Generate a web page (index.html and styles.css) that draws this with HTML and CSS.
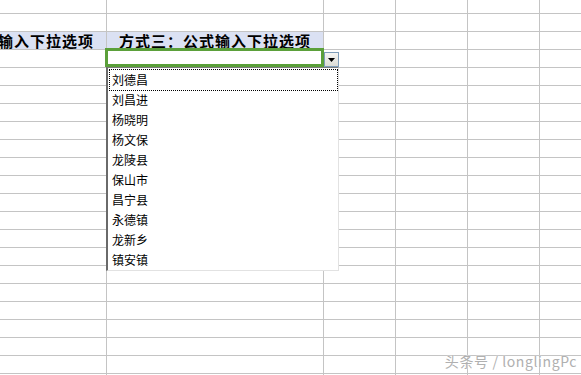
FILE: index.html
```html
<!DOCTYPE html>
<html lang="zh-CN">
<head>
    <meta charset="UTF-8">
    <meta name="viewport" content="width=device-width, initial-scale=1.0">
    <title>下拉选项</title>
    <link rel="stylesheet" href="styles.css">
</head>
<body>
    <div class="hoja">
        <!-- fila 1 -->
        <div></div><div></div><div></div><div></div><div></div><div></div>
        <div></div><div></div><div></div><div></div><div></div><div></div>
        <!-- titulos -->
        <div class="titulo titulo_a"><span>方式二：直接输入下拉选项</span></div>
        <div class="titulo titulo_b">方式三：公式输入下拉选项</div>
        <div></div><div></div><div></div><div></div>
        <!-- resto -->
        <div></div><div></div><div></div><div></div><div></div><div></div>
        <div></div><div></div><div></div><div></div><div></div><div></div>
        <div></div><div></div><div></div><div></div><div></div><div></div>
        <div></div><div></div><div></div><div></div><div></div><div></div>
        <div></div><div></div><div></div><div></div><div></div><div></div>
        <div></div><div></div><div></div><div></div><div></div><div></div>
        <div></div><div></div><div></div><div></div><div></div><div></div>
        <div></div><div></div><div></div><div></div><div></div><div></div>
        <div></div><div></div><div></div><div></div><div></div><div></div>
        <div></div><div></div><div></div><div></div><div></div><div></div>
        <div></div><div></div><div></div><div></div><div></div><div></div>
        <div></div><div></div><div></div><div></div><div></div><div></div>
        <div></div><div></div><div></div><div></div><div></div><div></div>
        <div></div><div></div><div></div><div></div><div></div><div></div>
        <div></div><div></div><div></div><div></div><div></div><div></div>
        <div></div><div></div><div></div><div></div><div></div><div></div>
        <div></div><div></div><div></div><div></div><div></div><div></div>
        <div></div><div></div><div></div><div></div><div></div><div></div>
        <div></div><div></div><div></div><div></div><div></div><div></div>
    </div>

    <!-- celda activa -->
    <div class="celda_activa"></div>
    <div class="tirador"></div>
    <div class="boton_lista">
        <svg width="7" height="4" viewBox="0 0 7 4"><polygon points="0,0 7,0 3.5,4" fill="#000"/></svg>
    </div>

    <!-- lista desplegable -->
    <ul class="lista">
        <li class="activo">刘德昌</li>
        <li>刘昌进</li>
        <li>杨晓明</li>
        <li>杨文保</li>
        <li>龙陵县</li>
        <li>保山市</li>
        <li>昌宁县</li>
        <li>永德镇</li>
        <li>龙新乡</li>
        <li>镇安镇</li>
    </ul>

    <p class="marca">头条号 / longlingPc</p>
</body>
</html>
```
FILE: styles.css
```css
html, body {
    margin: 0;
    padding: 0;
    width: 100%;
    height: 100%;
    overflow: hidden;
    background-color: #fff;
    font-family: "Noto Sans CJK SC", "Noto Sans", sans-serif;
}

.hoja {
    display: grid;
    width: 611px;
    grid-template-columns: 106px 216px 71px 71px 71px 71px;
    grid-template-rows: 13px repeat(21, 17px);
    gap: 1px;
    background-color: #c4c4c4;
}

.hoja div {
    background-color: #fff;
}

.hoja .titulo {
    background-color: #dbe1f3;
    font-size: 15px;
    font-weight: 700;
    letter-spacing: 1px;
    line-height: 17px;
    white-space: nowrap;
    color: #000;
}

.titulo_a {
    display: flex;
    justify-content: flex-end;
    padding-right: 12px;
    overflow: hidden;
}

.titulo_b {
    text-align: center;
}

.celda_activa {
    position: absolute;
    left: 105px;
    top: 48px;
    width: 213px;
    height: 13px;
    border: 3px solid #5ba03a;
}

.tirador {
    position: absolute;
    left: 320px;
    top: 64px;
    width: 4px;
    height: 3px;
    background-color: #5ba03a;
}

.boton_lista {
    position: absolute;
    left: 324px;
    top: 52px;
    width: 13px;
    height: 13px;
    border: 1px solid #7f9db9;
    background: linear-gradient(#f6f6f3, #dcdcd6);
    display: flex;
    align-items: center;
    justify-content: center;
}

.boton_lista svg {
    margin-top: 1px;
}

.lista {
    position: absolute;
    left: 106px;
    top: 67px;
    width: 230px;
    margin: 0;
    padding: 2px 0 0 0;
    list-style: none;
    background-color: #fff;
    border-left: 2px solid #6a6a6a;
    border-top: 1px solid #7a7a7a;
    border-right: 1px solid #e2e2e2;
    border-bottom: 1px solid #e2e2e2;
}

.lista li {
    height: 20px;
    line-height: 20px;
    margin: 0 1px 0 2px;
    padding-left: 2px;
    font-size: 12px;
    color: #000;
}

.lista .activo {
    outline: 1px dotted #000;
}

.marca {
    position: absolute;
    right: 4px;
    bottom: 6px;
    margin: 0;
    font-size: 14px;
    line-height: 16px;
    letter-spacing: 0.6px;
    color: #b0b0b0;
    text-shadow: 0 0 2px #fff;
}
```
